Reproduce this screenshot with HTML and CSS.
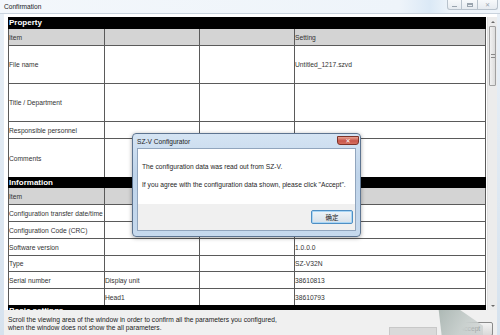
FILE: index.html
```html
<!DOCTYPE html>
<html>
<head>
<meta charset="utf-8">
<link rel="stylesheet" href="styles.css">
</head>
<body>
<div class="win">
  <div class="titlebar">
    <span class="title">Confirmation</span>
    <div class="ctrls">
      <span class="cb cb-min"><i class="g-min"></i></span>
      <span class="cb cb-max"><i class="g-max"></i></span>
      <span class="cb cb-close"><i class="g-x">✕</i></span>
    </div>
  </div>
  <div class="client">
    <div class="main">
      <div class="viewport">
        <div class="sec-head">Property</div>
        <div class="grid">
          <div class="c hd h16">Item</div><div class="c hd"></div><div class="c hd"></div><div class="c hd">Setting</div>
          <div class="c h37">File name</div><div class="c"></div><div class="c"></div><div class="c">Untitled_1217.szvd</div>
          <div class="c h37">Title / Department</div><div class="c"></div><div class="c"></div><div class="c"></div>
          <div class="c h16">Responsible personnel</div><div class="c"></div><div class="c"></div><div class="c"></div>
          <div class="c h38">Comments</div><div class="c"></div><div class="c"></div><div class="c"></div>
        </div>
        <div class="sec-head h11">Information</div>
        <div class="grid">
          <div class="c hd h16">Item</div><div class="c hd"></div><div class="c hd"></div><div class="c hd"></div>
          <div class="c h16">Configuration transfer date/time</div><div class="c"></div><div class="c"></div><div class="c"></div>
          <div class="c h16">Configuration Code (CRC)</div><div class="c"></div><div class="c"></div><div class="c"></div>
          <div class="c h16">Software version</div><div class="c"></div><div class="c"></div><div class="c">1.0.0.0</div>
          <div class="c h15">Type</div><div class="c"></div><div class="c"></div><div class="c">SZ-V32N</div>
          <div class="c h16">Serial number</div><div class="c">Display unit</div><div class="c"></div><div class="c">38610813</div>
          <div class="c h16"></div><div class="c">Head1</div><div class="c"></div><div class="c">38610793</div>
        </div>
        <div class="sec-head">Basic settings</div>
      </div>
      <div class="scrollbar">
        <div class="sb-arrow"><i class="tri-up"></i></div>
        <div class="sb-thumb"><i class="grip"></i></div>
        <div class="sb-track"></div>
        <div class="sb-arrow"><i class="tri-down"></i></div>
      </div>
    </div>
    <div class="footer">
      <p class="note">Scroll the viewing area of the window in order to confirm all the parameters you configured,<br>when the window does not show the all parameters.</p>
      <div class="btns">
        <span class="btn-cancel"></span>
        <span class="btn-accept">Accept</span>
      </div>
      <div class="artifact"></div>
    </div>
  </div>

  <div class="dialog">
    <div class="dlg-title">SZ-V Configurator</div>
    <span class="dlg-close">✕</span>
    <div class="dlg-inner">
      <div class="dlg-body">
        <p>The configuration data was read out from SZ-V.</p>
        <p>If you agree with the configuration data shown, please click "Accept".</p>
      </div>
      <div class="dlg-foot">
        <span class="dlg-btn">确定</span>
      </div>
    </div>
  </div>
</div>
</body>
</html>
```
FILE: styles.css
```css
* { box-sizing: border-box; }
html, body { margin: 0; padding: 0; }
body {
  width: 500px; height: 335px; overflow: hidden;
  font-family: "Liberation Sans", Arial, sans-serif;
  font-size: 6.7px; color: #333;
  background: #dfe8f1;
}
.win {
  position: relative;
  width: 500px; height: 335px;
  display: flex; flex-direction: column;
  background: linear-gradient(#e9f0f7, #d6e2ee);
}
.titlebar {
  height: 14px; flex: none;
  display: flex; align-items: flex-start; justify-content: space-between;
  background: linear-gradient(90deg, #f3f7fb 0%, #eef4fa 80%, #dbe9f6 86%, #eef4fa 90%);
  border-bottom: 1px solid #c9d3dd;
}
.title { font-size: 6.6px; color: #1b1b1b; padding: 3px 0 0 4px; }
.ctrls { display: flex; margin-right: 2px; }
.cb {
  height: 10px; display: flex; align-items: center; justify-content: center;
  border: 1px solid #b8c2cc; border-top: none;
  background: linear-gradient(#f7f9fb, #e6ebf0);
}
.cb-min { width: 15px; border-radius: 0 0 0 3px; }
.cb-max { width: 16px; border-left: none; }
.cb-close { width: 20px; border-left: none; border-radius: 0 0 3px 0; }
.g-min { width: 5px; height: 1px; background: #9aa4ae; margin-top: 4px; }
.g-max { width: 6px; height: 4px; border: 1px solid #9aa4ae; border-top-width: 2px; }
.g-x { font-style: normal; font-size: 6px; color: #9aa4ae; font-family: "DejaVu Sans", sans-serif; }

.client {
  flex: 1; min-height: 0; margin: 0 3px 0 4px;
  display: flex; flex-direction: column;
  background: #fff;
  overflow: hidden;
}
.main { flex: 1; display: flex; padding: 3px 0 0 4px; min-height: 0; overflow: hidden; }
.viewport { width: 478px; overflow: hidden; }
.sec-head {
  height: 12px; background: #000; color: #fff;
  font-weight: bold; font-size: 8px; line-height: 12px; padding-left: 1px;
}
.sec-head.h11 { height: 11px; line-height: 11px; }
.grid {
  display: grid;
  grid-template-columns: 95px 94px 94px 190px;
  gap: 1px;
  background: #5a5a5a;
  border-left: 1px solid #5a5a5a; border-right: 1px solid #5a5a5a;
}
.c { background: #fff; display: flex; align-items: center; white-space: nowrap; overflow: hidden; }
.c.hd { background: #d4d4d4; }
.h15 { height: 15px; } .h16 { height: 16px; } .h37 { height: 37px; } .h38 { height: 38px; }

.scrollbar {
  width: 10px; margin-left: 1px;
  display: flex; flex-direction: column;
  background: #ececec;
  border-left: 1px solid #e0e0e0;
}
.sb-arrow { height: 9px; flex: none; display: flex; align-items: center; justify-content: center; }
.tri-up { width: 0; height: 0; border-left: 2px solid transparent; border-right: 2px solid transparent; border-bottom: 2px solid #6a6a6a; }
.tri-down { width: 0; height: 0; border-left: 2px solid transparent; border-right: 2px solid transparent; border-top: 2px solid #6a6a6a; }
.sb-thumb {
  height: 60px; flex: none; margin: 0 1px;
  border: 1px solid #a0a0a0; border-radius: 1px;
  background: linear-gradient(90deg, #f2f2f2, #dcdcdc);
  display: flex; align-items: center; justify-content: center;
}
.grip { width: 4px; height: 4px; border-top: 1px solid #888; border-bottom: 1px solid #888; }
.sb-track { flex: 1; }

.footer {
  position: relative;
  height: 25px; flex: none;
  background: #f0f0f0;
  padding: 6px 0 0 4px;
  display: flex; justify-content: space-between;
  overflow: hidden;
}
.note { margin: 0; line-height: 8px; color: #222; }
.btns { display: flex; align-items: flex-start; gap: 10px; padding-top: 6px; margin-right: 4px; }
.btn-cancel { width: 48px; height: 12px; margin-top: 5px; background: #dadada; border: 1px solid #c8c8c8; }
.btn-accept {
  width: 46px; height: 14px; border: 1px solid #8a8a8a; border-radius: 2px;
  background: linear-gradient(#f3f3f3, #dadada);
  text-align: center; line-height: 11px; color: #222;
}
.artifact {
  position: absolute; left: 434px; top: -6px; width: 45px; height: 31px;
  background: linear-gradient(120deg, #aab6b2, #c9d0ce 60%, rgba(200,205,205,0.6));
  clip-path: polygon(0 0, 30% 0, 100% 70%, 100% 100%, 8% 100%);
}

.dialog {
  position: absolute; left: 132px; top: 133px; width: 229px; height: 104px;
  border: 1px solid #5d7490; border-radius: 4px;
  background: linear-gradient(#d5e4f3, #bfd4ea 40%, #c6d9ed);
  box-shadow: 0 1px 4px rgba(0,0,0,0.35);
  padding: 14px 4px 5px 4px;
}
.dlg-title { position: absolute; left: 4px; top: 4px; font-size: 6.6px; color: #1e1e1e; }
.dlg-close {
  position: absolute; left: 204px; top: 2px; width: 22px; height: 9px;
  border: 1px solid #7d3328; border-radius: 0 0 3px 3px;
  background: linear-gradient(#e8a393, #c8564a 55%, #d66f5e);
  color: #fff; font-size: 6px; text-align: center; line-height: 7px;
  font-family: "DejaVu Sans", sans-serif;
}
.dlg-inner { height: 100%; border: 1px solid #91a5bd; display: flex; flex-direction: column; }
.dlg-body { height: 55px; background: #fff; padding: 14px 0 0 4px; color: #1e1e1e; }
.dlg-body p { margin: 0 0 10px; line-height: 8px; }
.dlg-foot { flex: 1; background: #f0f0f0; display: flex; justify-content: flex-end; align-items: center; padding-right: 2px; }
.dlg-btn {
  width: 42px; height: 14px; border: 1px solid #4f8fc4; border-radius: 2px;
  background: linear-gradient(#eef4f9, #d8e1e9);
  box-shadow: inset 0 0 0 1px #a9d6f5;
  font-family: "Noto Sans CJK SC", sans-serif; font-size: 6.5px; color: #222;
  display: flex; align-items: center; justify-content: center;
}
```
